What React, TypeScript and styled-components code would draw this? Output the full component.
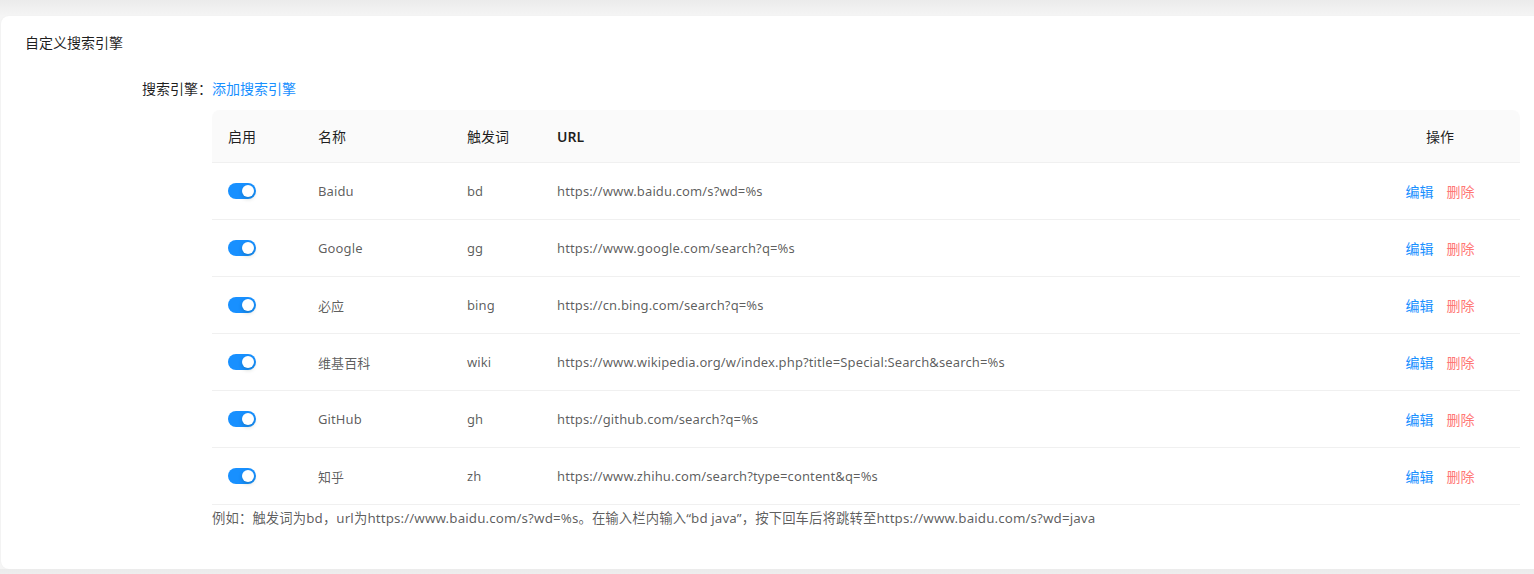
import React from "react";
import styled, { createGlobalStyle } from "styled-components";

const GlobalStyle = createGlobalStyle`
  html, body {
    margin: 0;
    padding: 0;
  }
  body {
    background: linear-gradient(#ebebeb 0, #f5f5f5 16px) #f5f5f5;
    font-family: "Noto Sans", "Noto Sans CJK SC", sans-serif;
    overflow: hidden;
  }
`;

type Engine = {
  name: string;
  keyword: string;
  url: string;
  enabled: boolean;
};

const engines: Engine[] = [
  { name: "Baidu", keyword: "bd", url: "https://www.baidu.com/s?wd=%s", enabled: true },
  { name: "Google", keyword: "gg", url: "https://www.google.com/search?q=%s", enabled: true },
  { name: "必应", keyword: "bing", url: "https://cn.bing.com/search?q=%s", enabled: true },
  {
    name: "维基百科",
    keyword: "wiki",
    url: "https://www.wikipedia.org/w/index.php?title=Special:Search&search=%s",
    enabled: true,
  },
  { name: "GitHub", keyword: "gh", url: "https://github.com/search?q=%s", enabled: true },
  {
    name: "知乎",
    keyword: "zh",
    url: "https://www.zhihu.com/search?type=content&q=%s",
    enabled: true,
  },
];

const App: React.FC = (): JSX.Element => {
  return (
    <Page>
      <GlobalStyle />
      <Card>
        <CardTitle>自定义搜索引擎</CardTitle>
        <FormRow>
          <FormLabel>搜索引擎：</FormLabel>
          <LinkButton>添加搜索引擎</LinkButton>
        </FormRow>
        <FormRow>
          <div />
          <div>
            <Table>
              <colgroup>
                <col style={{ width: 90 }} />
                <col style={{ width: 149 }} />
                <col style={{ width: 90 }} />
                <col />
                <col style={{ width: 160 }} />
              </colgroup>
              <thead>
                <tr>
                  <HeadCell $first>启用</HeadCell>
                  <HeadCell>名称</HeadCell>
                  <HeadCell>触发词</HeadCell>
                  <HeadCell $latin>URL</HeadCell>
                  <HeadCell $center $last>
                    操作
                  </HeadCell>
                </tr>
              </thead>
              <tbody>
                {engines.map((e) => (
                  <tr key={e.keyword}>
                    <Cell>
                      <Switch $on={e.enabled} role="switch" aria-checked={e.enabled}>
                        <Knob $on={e.enabled} />
                      </Switch>
                    </Cell>
                    <Cell>{e.name}</Cell>
                    <Cell>{e.keyword}</Cell>
                    <Cell>{e.url}</Cell>
                    <Cell $center>
                      <Actions>
                        <ActionLink>编辑</ActionLink>
                        <ActionLink $danger>删除</ActionLink>
                      </Actions>
                    </Cell>
                  </tr>
                ))}
              </tbody>
            </Table>
            <Hint>
              例如：触发词为bd，url为https://www.baidu.com/s?wd=%s。在输入栏内输入“bd
              java”，按下回车后将跳转至https://www.baidu.com/s?wd=java
            </Hint>
          </div>
        </FormRow>
      </Card>
    </Page>
  );
};

const Page = styled.div`
  padding: 16px 0 0 1px;
`;

const Card = styled.section`
  box-sizing: border-box;
  height: 553px;
  margin-right: -20px;
  background: #fff;
  border-radius: 8px;
  padding: 16px 24px 0 24px;
  box-shadow: 0 0 2px rgba(0, 0, 0, 0.04);
`;

const CardTitle = styled.h3`
  margin: 0 0 24px;
  font-size: 14px;
  font-weight: 400;
  line-height: 22px;
  color: rgba(0, 0, 0, 0.88);
`;

const FormRow = styled.div`
  display: grid;
  grid-template-columns: 187px 1308px;
  align-items: center;
  & + & {
    margin-top: 10px;
  }
`;

const FormLabel = styled.label`
  font-size: 14px;
  line-height: 22px;
  text-align: right;
  color: rgba(0, 0, 0, 0.88);
`;

const LinkButton = styled.a`
  font-size: 14px;
  line-height: 22px;
  color: #1890ff;
  cursor: pointer;
`;

const Table = styled.table`
  width: 100%;
  table-layout: fixed;
  border-collapse: separate;
  border-spacing: 0;
  font-size: 13px;
  letter-spacing: 0.12px;
`;

const HeadCell = styled.th<{
  $center?: boolean;
  $first?: boolean;
  $last?: boolean;
  $latin?: boolean;
}>`
  height: 52px;
  padding: 0 16px;
  background: #fafafa;
  border-bottom: 1px solid #f0f0f0;
  font-size: 14px;
  letter-spacing: 0;
  text-align: ${(p) => (p.$center ? "center" : "left")};
  font-weight: ${(p) => (p.$latin ? 600 : 400)};
  color: rgba(0, 0, 0, 0.88);
  border-top-left-radius: ${(p) => (p.$first ? "8px" : "0")};
  border-top-right-radius: ${(p) => (p.$last ? "8px" : "0")};
`;

const Cell = styled.td<{ $center?: boolean }>`
  height: 56px;
  padding: 0 16px;
  border-bottom: 1px solid #f0f0f0;
  text-align: ${(p) => (p.$center ? "center" : "left")};
  color: rgba(0, 0, 0, 0.65);
  white-space: nowrap;
`;

const Switch = styled.button<{ $on: boolean }>`
  position: relative;
  display: block;
  width: 28px;
  height: 16px;
  padding: 0;
  border: none;
  border-radius: 8px;
  background: ${(p) => (p.$on ? "#1890ff" : "rgba(0,0,0,0.25)")};
  cursor: pointer;
`;

const Knob = styled.span<{ $on: boolean }>`
  position: absolute;
  top: 2px;
  left: ${(p) => (p.$on ? "14px" : "2px")};
  width: 12px;
  height: 12px;
  border-radius: 50%;
  background: #fff;
  box-shadow: 0 2px 4px rgba(0, 35, 11, 0.2);
`;

const Actions = styled.div`
  display: inline-flex;
  gap: 13px;
  font-size: 14px;
  letter-spacing: 0;
`;

const ActionLink = styled.a<{ $danger?: boolean }>`
  color: ${(p) => (p.$danger ? "#ff7875" : "#1890ff")};
  cursor: pointer;
`;

const Hint = styled.div`
  font-size: 13.35px;
  line-height: 22px;
  margin-top: 2px;
  letter-spacing: 0.12px;
  white-space: nowrap;
  color: rgba(0, 0, 0, 0.65);
`;

export default App;
